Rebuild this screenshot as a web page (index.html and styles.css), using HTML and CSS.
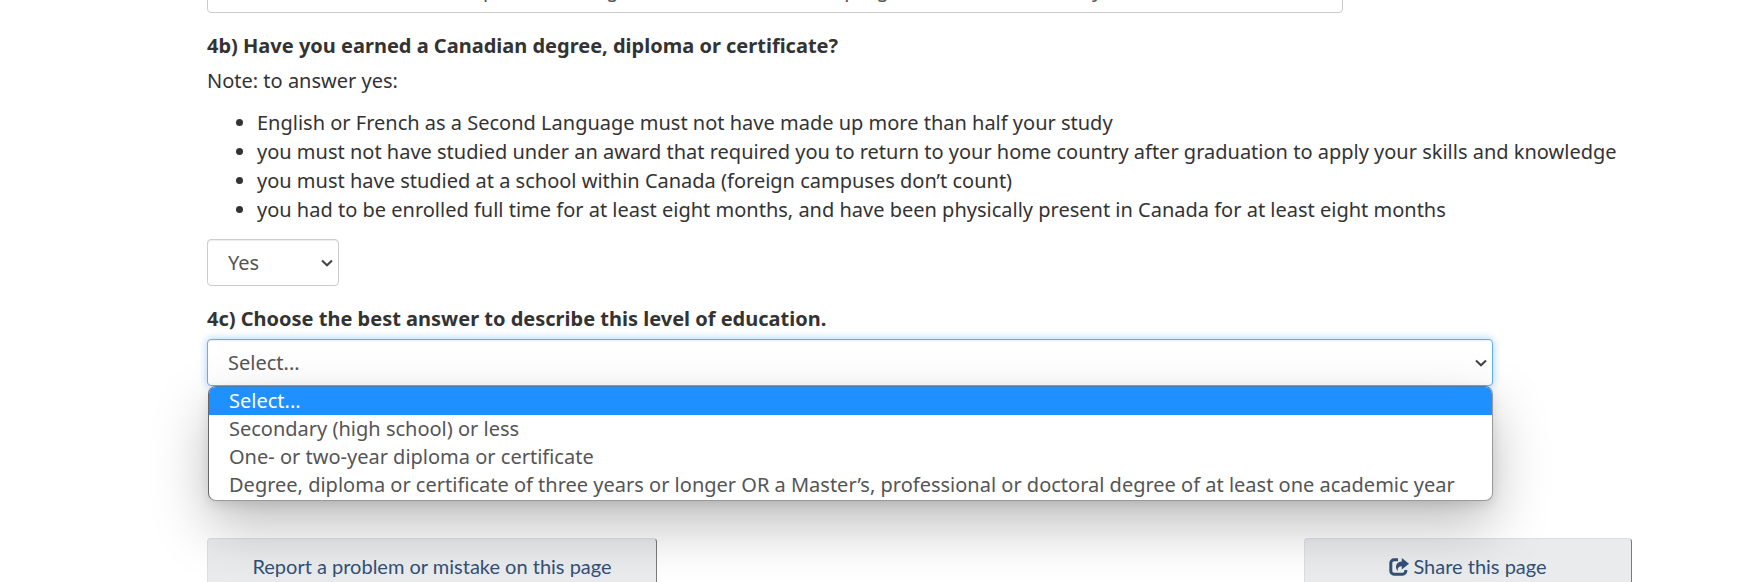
FILE: index.html
```html
<!DOCTYPE html>
<html lang="en">
<head>
<meta charset="utf-8">
<title>Education questions</title>
<link rel="stylesheet" href="styles.css">
</head>
<body>
<main class="page">
  <form class="questions">
    <div class="select-wrap select-level">
      <select class="control" id="q4" aria-label="Level of education">
        <option>Two or more certificates, diplomas or degrees. One must be for a program of three or more years</option>
      </select>
    </div>

    <div class="question">
      <label class="question-label" for="q4b">4b) Have you earned a Canadian degree, diploma or certificate?</label>
      <p class="note">Note: to answer yes:</p>
      <ul class="conditions">
        <li>English or French as a Second Language must not have made up more than half your study</li>
        <li>you must not have studied under an award that required you to return to your home country after graduation to apply your skills and knowledge</li>
        <li>you must have studied at a school within Canada (foreign campuses don’t count)</li>
        <li>you had to be enrolled full time for at least eight months, and have been physically present in Canada for at least eight months</li>
      </ul>
      <div class="select-wrap select-short">
        <select class="control" id="q4b">
          <option>Yes</option>
          <option>No</option>
        </select>
        <svg class="chevron" viewBox="0 0 12 8" aria-hidden="true"><path d="M1 1.5 6 6.3 11 1.5"/></svg>
      </div>
    </div>

    <div class="question">
      <label class="question-label" for="q4c">4c) Choose the best answer to describe this level of education.</label>
      <div class="select-wrap select-long">
        <select class="control is-open" id="q4c">
          <option>Select...</option>
        </select>
        <svg class="chevron" viewBox="0 0 12 8" aria-hidden="true"><path d="M1 1.5 6 6.3 11 1.5"/></svg>
        <ul class="menu" role="listbox" aria-label="Level of education answers">
          <li class="menu-item is-active" role="option" aria-selected="true">Select...</li>
          <li class="menu-item" role="option" aria-selected="false">Secondary (high school) or less</li>
          <li class="menu-item" role="option" aria-selected="false">One- or two-year diploma or certificate</li>
          <li class="menu-item" role="option" aria-selected="false">Degree, diploma or certificate of three years or longer OR a Master’s, professional or doctoral degree of at least one academic year</li>
        </ul>
      </div>
    </div>
  </form>

  <div class="page-actions">
    <button class="btn btn-report" type="button">Report a problem or mistake on this page</button>
    <button class="btn btn-share" type="button">
      <svg class="share-icon" viewBox="0 0 20 18" aria-hidden="true">
        <path d="M9 1.8H5A3.2 3.2 0 0 0 1.8 5v8A3.2 3.2 0 0 0 5 16.2h8.6a3.2 3.2 0 0 0 3.2-3.2v-1" fill="none" stroke="currentColor" stroke-width="3"/>
        <path d="M12.8 0 20 5.8l-7.2 5.6V8.2C9.800 8.200 8.400 9.800 8.600 13 5.200 8.600 7.400 3.600 12.800 3.400z" fill="currentColor"/>
      </svg>
      Share this page
    </button>
  </div>
</main>
</body>
</html>
```
FILE: styles.css
```css
* {
  box-sizing: border-box;
}

html {
  overflow: hidden;
}

body {
  margin: 0;
  background: #fff;
  color: #333;
  font: 20px/29px "Noto Sans", sans-serif;
}

/* The view starts part of the way down the form. */
.page {
  margin-top: -34px;
  padding: 0 105px 0 207px;
}

.question {
  margin-top: 18px;
}

.question-label {
  display: block;
  margin-bottom: 6px;
  font-weight: 700;
}

.note {
  margin: 0 0 13px;
}

.conditions {
  margin: 0 0 15px;
  padding-left: 50px;
}

.select-wrap {
  position: relative;
  max-width: 100%;
}

.select-level {
  width: 1136px;
}

.select-short {
  width: 132px;
}

.select-long {
  width: 1286px;
}

.control {
  display: block;
  width: 100%;
  height: 47px;
  padding: 0 20px;
  appearance: none;
  border: 1px solid #ccc;
  border-radius: 4px;
  background: #fff;
  box-shadow: inset 0 1px 1px rgba(0, 0, 0, .075);
  color: #555;
  font: inherit;
}

.control.is-open {
  border-color: #66afe9;
  box-shadow: inset 0 1px 1px rgba(0, 0, 0, .075), 0 0 8px rgba(102, 175, 233, .6);
}

.chevron {
  position: absolute;
  top: 20px;
  right: 6px;
  width: 12px;
  height: 8px;
  fill: none;
  stroke: #444;
  stroke-width: 2;
  pointer-events: none;
}

.menu {
  position: absolute;
  top: 100%;
  left: 1px;
  right: 0;
  z-index: 1;
  margin: 0;
  padding: 0 0 1px;
  overflow: hidden;
  list-style: none;
  border: 1px solid #999;
  border-left-color: #666;
  border-top-color: #4c7ba8;
  border-radius: 8px;
  background: #fff;
  box-shadow: 0 4px 12px rgba(0, 0, 0, .1), 0 24px 56px rgba(0, 0, 0, .26);
  color: #555;
  line-height: 28px;
}

.menu-item {
  padding: 0 20px;
}

.menu-item.is-active {
  background: #1e90ff;
  color: #fff;
}

.page-actions {
  display: flex;
  justify-content: space-between;
  gap: 24px;
  margin-top: 152px;
}

.btn {
  display: flex;
  align-items: center;
  justify-content: center;
  gap: 4px;
  padding: 13px 12px;
  border: 1px solid #dcdee1;
  border-right-color: #7a7a7a;
  border-bottom-color: #7a7a7a;
  border-radius: 4px;
  background: #eaebed;
  color: #335075;
  font: 20px/29px Lato, sans-serif;
}

.btn-report {
  flex: 0 1 450px;
}

.btn-share {
  flex: 0 1 328px;
}

.share-icon {
  width: 20px;
  height: 18px;
}
```
